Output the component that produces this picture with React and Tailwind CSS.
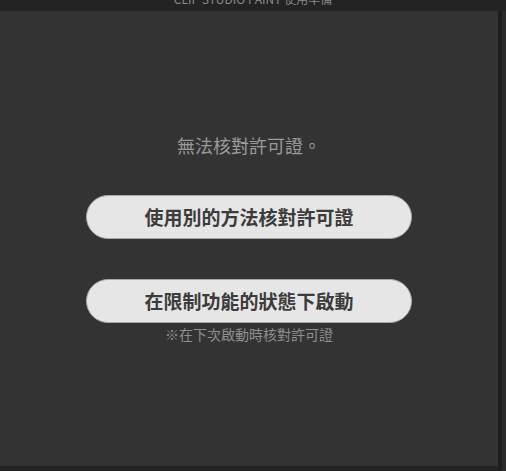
export default function App() {
  const font = { fontFamily: '"Noto Sans CJK TC", "Noto Sans", sans-serif' };
  return (
    <div className="w-[506px] h-[471px] bg-[#232323] flex flex-col overflow-hidden" style={font}>
      <div className="h-[11px] shrink-0 relative overflow-hidden bg-[#232323]">
        <div className="absolute left-0 right-0 top-[-9px] text-center text-[12px] leading-[16px] text-[#8a8a8a]">
          CLIP STUDIO PAINT 使用準備
        </div>
      </div>
      <div className="flex flex-1">
        <div className="w-[498px] h-[455px] bg-[#333333] flex flex-col items-center">
          <div className="mt-[122px] text-[18px] leading-[24px] text-[#9a9a9a]">無法核對許可證。</div>
          <button className="mt-[38px] w-[326px] h-[44px] rounded-full bg-[#e6e6e6] border border-[#a8a8a8] text-[19px] font-semibold text-[#3c3c3c]">
            使用別的方法核對許可證
          </button>
          <button className="mt-[40px] w-[326px] h-[44px] rounded-full bg-[#e6e6e6] border border-[#a8a8a8] text-[19px] font-semibold text-[#3c3c3c]">
            在限制功能的狀態下啟動
          </button>
          <div className="mt-[1px] text-[14px] leading-[20px] text-[#8f8f8f]">※在下次啟動時核對許可證</div>
        </div>
        <div className="w-[4px] bg-[#1e1e1e]" />
        <div className="w-[4px] bg-[#2b2b2b]" />
      </div>
    </div>
  );
}
